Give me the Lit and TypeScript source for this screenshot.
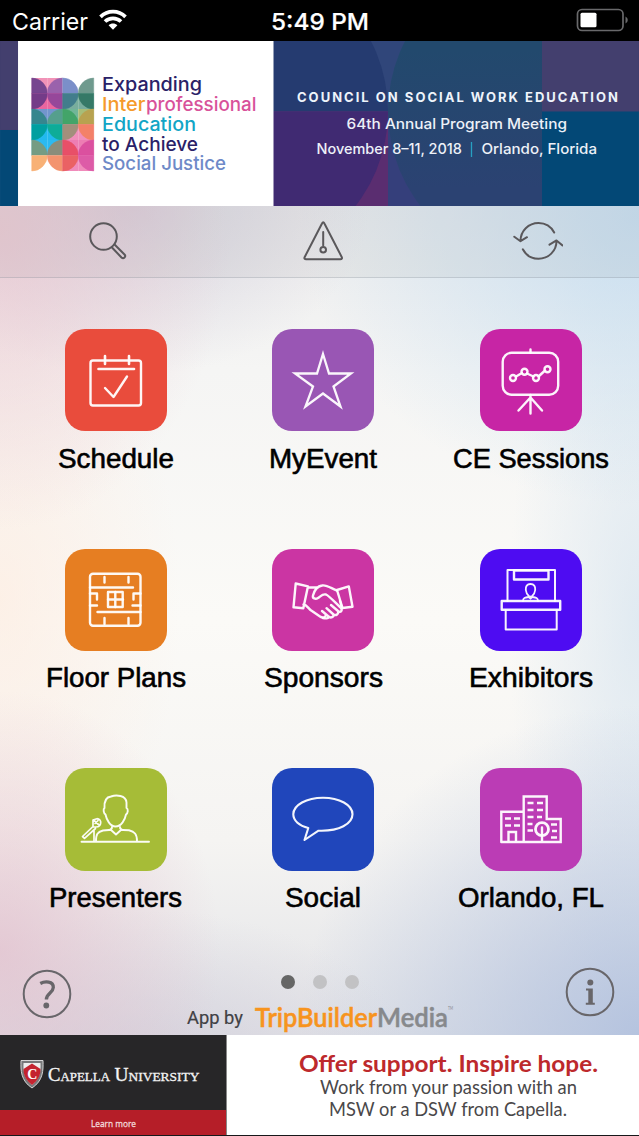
import { LitElement, html, svg, css } from "lit";
import { customElement, property } from "lit/decorators.js";

/** One line of text set to an exact measure. */
@customElement("fit-line")
class FitLine extends LitElement {
  @property() text = "";
  @property({ type: Number }) measure = 100;
  @property({ type: Number }) lead = 30;
  @property({ type: Number }) base = 22;
  static styles = css`
    :host { display: block; line-height: 0; }
    svg { display: block; overflow: visible; }
    text { fill: currentColor; stroke: currentColor; stroke-width: var(--heavy, 0); }
  `;
  render() {
    return html`<svg width=${this.measure} height=${this.lead}>
      <text x="0" y=${this.base} textLength=${this.measure} lengthAdjust="spacingAndGlyphs">${this.text}</text>
    </svg>`;
  }
}

const calendar = svg`<rect x="25.5" y="31.5" width="50.5" height="45" rx="2.5"/>
  <path d="M40 27v8M64 27v8" stroke-width="2.6"/><path d="M33.5 40H69" stroke-width="2.6"/><path d="M40 59l8.5 9L62 47.5"/>`;
const star = svg`<path stroke-width="2.300" stroke-linejoin="miter" d="M51 25l6 19.500h22l-17.500 13 7 20-17.500-13-17.500 13 7.500-20-18-13h22z"/>`;
const chart = svg`<rect x="22.7" y="23.700" width="55.500" height="42" rx="9"/>
  <path d="M50.500 20.500v3M50.500 66v18.500M50.500 68.500l-12 13M50.500 68.500l11.500 13M36 47.500l6-3.500M47 44.500l6.500 3M58.500 47.500l6.500-6"/>
  <circle cx="33" cy="49" r="3"/><circle cx="44.500" cy="42.700" r="3"/><circle cx="56" cy="49" r="3"/><circle cx="67.500" cy="40.200" r="3"/>`;
const plan = svg`<rect x="25" y="24.700" width="50.500" height="52" rx="3"/>
  <path d="M39.500 28v5.500M63.500 28v5.500M25 38.500h43M32.500 63h43M39.500 69v6M63.500 69v6M25 44.500h7v6M25 56.500h7M75.500 44.500h-7v6M75.500 56.500h-8M50.300 43v15M43 50.500h15"/>
  <rect x="43" y="43" width="14.700" height="15"/>`;
const handshake = svg`<path d="M23.700 34.500L36 37.300 31.300 59.300 21.500 58.300zM65 41l11.800-3.600 3.700 20.300-10 1.300zM36 38.500h8.500M31.500 55.500c3 .3 4.500 3.300 7 5.500l9.500 6.500c2 1.500 4.500 1.500 5.500-.5"/>
  <path d="M65 41.500c-5-1.500-10-6-15-5-5 .8-7.500 4.500-9 10-.8 3 2.500 4 5 2.500 2.500-1.500 4.500-4.500 8-3.500 3.500 1.500 10 9 14.500 13 2.500 2.500.5 5-2 4M66 62l-7-6M66 62c1 3-2 5-4.500 3.500l-7-6.300M61.500 65.500c.5 2.500-2.500 4-5 2l-6.500-5.500M56.500 67.500c0 2.500-3.500 2-5.500 1.500M68 52l2 7"/>`;
const booth = svg`<path stroke-width="2" d="M27.500 52V21H75v31"/><rect x="34" y="21.500" width="34.500" height="9"/>
  <rect x="21.700" y="52" width="58.500" height="8.700"/><path stroke-width="2" d="M25.700 61v19.500h51V61"/>
  <path stroke-width="1.800" d="M50.500 35c3.500 0 5 2.300 4.700 6-.4 3-1.700 5-3 6l-1.700.8-1.700-.8c-1.300-1-2.600-3-3-6-.3-3.700 1.200-6 4.700-6zM43 52c0-3 2-3.500 5.700-4l1.800 1.700 1.800-1.700c3.700.5 5.700 1 5.700 4"/>`;
const speaker = svg`<path stroke-width="1.900" d="M16.500 73.700H84M31 73c0-7 1.500-9 7-10.500l6-.5c2 0 3-1 3-3M72 73c0-7-2.500-9.500-8-10.700l-6-.3c-2 0-3-1-3-3M45.500 61.500l5.500 5 5.500-5"/>
  <path stroke-width="1.900" d="M39.500 40c-.5-8 2-11 6.500-11.500 5-1.800 15-1.500 15.500 6V40c2 1 1.500 5-.5 6.500-1 5-4.500 12-10.500 12-5.500 0-9-7-10-12-2-1.500-2.500-5.500-1-6.500z"/>
  <path stroke-width="1.700" d="M27.500 59L17.500 68.500l2 1.800L30.500 60.500M28 59v-7l4-1.300c2.500 0 4 2 3.700 4.300-.3 3-2.500 4-4.700 4zM29 73V62M28.500 52l6 5.500M30 55.500l3-3"/>`;
const bubble = svg`<path stroke-width="2.100" d="M36.300 60c-9-2-15-7.500-15-13.700 0-9.300 13.300-16.600 29.700-16.600s29.500 7.300 29.500 16.600S67.500 63.500 46.500 62.700L32.500 72z"/>`;
const city = svg`<path stroke-linejoin="miter" d="M21.300 74V43.700H43.700M43.700 74V28.500H66.700V51H80.700V74H21.300M28.500 73.500V64h7.500v9.500M62 59.500V74"/>
  <circle cx="62" cy="61.200" r="6.500" stroke-width="2.800"/>
  <path stroke-width="2.500" stroke-linecap="butt" d="M25 50.500h6M34 50.500h6M25 57.500h6M34 57.500h6M47.500 35h6M57 35h6M47.500 42h6M57 42h6M47.500 49h6M57 49h5M47.500 56h5M47.500 62.500h5.500M71 56.500h6M72 63h5M71 69.500h6"/>`;

const apps = [
  { name: "Schedule", w: 116, color: "#e94c3c", icon: calendar },
  { name: "MyEvent", w: 108, color: "#9956b4", icon: star },
  { name: "CE Sessions", w: 156, color: "#c725a5", icon: chart },
  { name: "Floor Plans", w: 140, color: "#e67e22", icon: plan },
  { name: "Sponsors", w: 119, color: "#cb35a3", icon: handshake },
  { name: "Exhibitors", w: 124, color: "#4e0cf2", icon: booth },
  { name: "Presenters", w: 133, color: "#a6bc37", icon: speaker },
  { name: "Social", w: 76, color: "#2046bb", icon: bubble },
  { name: "Orlando, FL", w: 146, color: "#bb3cb5", icon: city },
];

// Quarter colours of the mosaic: [ground, quarter disc], row by row, four to a row.
const mosaic = [
  ["#f192b7", "#76458f"], ["#f192b7", "#9a62ac"], ["#ffffff", "#7b8fc9"], ["#ffffff", "#6f9a8e"],
  ["#ea659f", "#743b88"], ["#ea659f", "#96479a"], ["#78ad9d", "#427d8c"], ["#78ad9d", "#357967"],
  ["#7295cd", "#36868e"], ["#7295cd", "#559f8d"], ["#71b698", "#43a469"], ["#a6bd79", "#b8a250"],
  ["#22b9ee", "#009fa0"], ["#22b9ee", "#0eac98"], ["#f08fbb", "#a28f7c"], ["#f08fbb", "#f38168"],
  ["#2cbaf1", "#759c83"], ["#2cbaf1", "#8a8d7b"], ["#ed7db3", "#e84f68"], ["#ed7db3", "#db509f"],
  ["#ffffff", "#f8b176"], ["#ffffff", "#f3946f"], ["#f08bbb", "#ea6264"], ["#f08bbb", "#dd5ba7"],
];

@customElement("app-root")
class AppRoot extends LitElement {
  static styles = css`
    :host {
      display: flex; flex-direction: column; width: 639px; height: 1136px; overflow: hidden;
      font-family: "Liberation Sans", Arial, sans-serif; color: #000;
      background:
        radial-gradient(ellipse 230px 300px at 0 230px, rgba(234,196,206,.75), transparent),
        radial-gradient(ellipse 240px 170px at 130px 206px, rgba(200,194,212,.6), transparent),
        radial-gradient(ellipse 220px 260px at 0 950px, rgba(226,190,204,.75), transparent),
        radial-gradient(ellipse 260px 150px at 150px 1060px, rgba(205,200,215,.6), transparent),
        radial-gradient(ellipse 340px 330px at 639px 1035px, rgba(176,192,222,.9), transparent),
        radial-gradient(ellipse 340px 290px at 639px 215px, rgba(194,220,240,.85), transparent),
        radial-gradient(ellipse 130px 420px at 639px 620px, rgba(218,230,240,.8), transparent),
        radial-gradient(ellipse 180px 330px at 0 600px, rgba(253,236,224,.7), transparent),
        linear-gradient(#ececed 206px, #f5f5f4 370px, #fbfaf7 620px, #f5f4f2 840px, #e2e3e7 1035px);
    }
    svg { display: block; }
    .status {
      flex: none; height: 40.5px; background: #000; color: #fff; display: grid;
      grid-template-columns: 1fr auto 1fr; align-items: center; padding: 0 11px 0 12px;
      font: 400 23.5px Inter, sans-serif;
    }
    .carrier { display: flex; align-items: center; gap: 11px; }
    .carrier fit-line, .time { margin-top: 2px; }
    .time { font-weight: 500; --heavy: .2px; }
    .battery { justify-self: end; }
    .banner { flex: none; height: 165.7px; overflow: hidden; }
    .banner text { font-family: Inter, sans-serif; font-weight: 550; }
    .banner .head { font-weight: 700; }
    .tools {
      flex: none; height: 71px; border-bottom: 1px solid rgba(130,140,150,.28);
      background: rgba(90,90,90,.06);
      display: flex; justify-content: space-between; padding: 0 76px 0 82px;
    }
    .tools svg { fill: none; stroke: #5a585b; stroke-width: 2; stroke-linecap: round; stroke-linejoin: round; }
    .grid {
      flex: none; box-sizing: border-box; display: grid;
      grid-template-columns: repeat(3, 207.6px); grid-auto-rows: 219.6px;
      padding: 51px 0 0 12px; height: 635px;
    }
    .app { display: flex; flex-direction: column; align-items: center; }
    .tile { width: 102px; height: 102.200px; border-radius: 20px; }
    .tile svg { fill: none; stroke: #fff; stroke-opacity: .95; stroke-width: 2.400; stroke-linecap: round; stroke-linejoin: round; }
    .name { font-size: 27px; margin-top: 7.500px; --heavy: .6px; }
    .foot { flex: none; height: 121.800px; display: flex; justify-content: space-between; padding: 0 24px 0 22px; }
    .round { margin-top: 55.500px; }
    .round.info { margin-top: 54px; }
    .round svg { fill: none; stroke: #68666a; stroke-width: 2; }
    .round .mark { fill: #68666a; stroke: none; }
    .middle { display: flex; flex-direction: column; align-items: center; margin: 61.500px 0 0 2px; }
    .dots { display: flex; gap: 18px; }
    .dot { width: 14px; height: 14px; border-radius: 50%; background: #c2c2c4; }
    .dot.on { background: #666; }
    .credit { display: flex; margin-top: 11.500px; }
    .by { font: 400 19px Roboto, sans-serif; color: #414145; margin-right: 12px; --heavy: .2px; }
    .trip { font: 600 26px Lato, sans-serif; color: #f7941e; --heavy: .5px; }
    .media { font: 600 26px Lato, sans-serif; color: #87898c; --heavy: .5px; }
    .tm { font: 400 6px Lato, sans-serif; color: #87898c; }
    .ad { flex: none; height: 100px; display: flex; background: #fff; border-bottom: 1px solid #17181a; }
    .capella { width: 226px; display: flex; flex-direction: column; background: #272628; border-right: .5px solid #888; }
    .brand { height: 75px; }
    .learn { flex: 1; background: #b51e28; color: #f3dadb; display: flex; justify-content: center; font: 400 9.500px "Open Sans", sans-serif; --heavy: .3px; }
    .pitch { flex: 1; display: flex; flex-direction: column; align-items: center; padding: 14px 0 0 30px; box-sizing: border-box; }
    .offer { font: 700 23.500px Lato, sans-serif; color: #bd292c; }
    .copy { font: 400 19.500px Lato, sans-serif; color: #4a484a; }
  `;

  private fit(cls: string, text: string, w: number, lead: number, base: number) {
    return html`<fit-line class=${cls} .text=${text} .measure=${w} .lead=${lead} .base=${base}></fit-line>`;
  }

  private banner() {
    const line = (t: string, x: number, y: number, w: number, size: number, fill: string, cls = "") =>
      svg`<text class=${cls} x=${x} y=${y} textLength=${w} lengthAdjust="spacingAndGlyphs" font-size=${size} fill=${fill}>${t}</text>`;
    const quarter = ([ground, disc]: string[], i: number) => {
      const s = 15.5, col = i % 4, row = Math.floor(i / 4);
      const x = 31.700 + col * s, y = 37 + row * s;
      const cx = col % 2 === 0 ? x : x + s;
      const cy = row % 2 === 0 ? y + s : y;
      const ox = cx === x ? x + s : x, oy = cy === y ? y + s : y;
      const sweep = (cx === x) === (cy === y) ? 0 : 1;
      return svg`<rect x=${x} y=${y} width=${s} height=${s} fill=${ground}/>
        <path fill=${disc} stroke=${disc} stroke-width=".5" d="M${cx} ${cy}V${oy}A${s} ${s} 0 0 ${sweep} ${ox} ${cy}Z"/>`;
    };
    return html`<svg class="banner" width="639" height="165.7" viewBox="0 0 639 165.7">
      <defs>
        <linearGradient id="mid" x1="0" y1="0" x2="0" y2="1"><stop offset=".3" stop-color="#22496d"/><stop offset=".75" stop-color="#2b4272"/></linearGradient>
        <clipPath id="centre"><rect x="388" y="0" width="154" height="166"/></clipPath>
        <clipPath id="upper"><rect x="273" y="0" width="269" height="70.500"/></clipPath>
        <clipPath id="lower"><rect x="273" y="70.500" width="115" height="96"/></clipPath>
      </defs>
      <rect width="639" height="165.700" fill="#034876"/>
      <rect width="18" height="89" fill="#433f6e"/>
      <rect x="273.500" width="268.500" height="165.700" fill="#353f7b"/>
      <rect x="273.500" width="268.500" height="70.500" fill="#30467a"/>
      <circle cx="234" cy="70.500" r="154" fill="#253b70" clip-path="url(#upper)"/>
      <rect x="273.500" y="70.500" width="114.500" height="96" fill="#5a2d70"/>
      <circle cx="234" cy="70.500" r="154" fill="#402a72" clip-path="url(#lower)"/>
      <circle cx="542" cy="70.500" r="154" fill="url(#mid)" clip-path="url(#centre)"/>
      <rect x="542" width="97" height="70.500" fill="#433f6e"/>
      <rect x="18" width="255.500" height="165.700" fill="#fff"/>
      ${mosaic.map(quarter)}
      ${line("Expanding", 102, 50.500, 100, 18.500, "#2a2167")}
      ${line("Inter", 102, 70.300, 43.500, 18.500, "#f59a2b")}
      ${line("professional", 146, 70.300, 110.500, 18.500, "#d8529a")}
      ${line("Education", 102, 90.200, 94, 18.500, "#12a5c6")}
      ${line("to Achieve", 102, 110, 96, 18.500, "#2a2167")}
      ${line("Social Justice", 102, 129.500, 124, 18.500, "#6e8ac8")}
      <text class="head" x="297" y="61" textLength="321" font-size="13" fill="#eef4fb">COUNCIL ON SOCIAL WORK EDUCATION</text>
      ${line("64th Annual Program Meeting", 346.500, 88, 220.500, 14.500, "#edf1f8")}
      ${line("November 8–11, 2018", 316.500, 112.700, 145.500, 14.500, "#edf1f8")}
      <path d="M471.500 101v15" stroke="#27a0c2" stroke-width="1.300"/>
      ${line("Orlando, Florida", 481.500, 112.700, 115.500, 14.500, "#edf1f8")}
    </svg>`;
  }

  render() {
    return html`
      <div class="status">
        <div class="carrier">
          ${this.fit("", "Carrier", 76, 30, 24)}
          <svg width="28" height="22" viewBox="0 0 28 22" fill="none" stroke="#fff" stroke-width="3.700">
            <path d="M1.500 7.800C8.500 1 19.500 1 26.500 7.800"/><path d="M6 12.500c4.500-4.300 11.500-4.300 16 0"/>
            <path d="M9.600 16.300c2.500-2.300 6.300-2.300 8.800 0L14 20.700z" fill="#fff" stroke="none"/>
          </svg>
        </div>
        ${this.fit("time", "5:49 PM", 98, 30, 24)}
        <svg class="battery" width="52" height="24" viewBox="0 0 52 24">
          <rect x="1.500" y="1.500" width="45.500" height="21" rx="4.500" fill="none" stroke="#69696b" stroke-width="1.700"/>
          <rect x="4.500" y="4.800" width="16" height="14.500" rx="1.500" fill="#fff"/>
          <path d="M49.500 8.500q2.300 1 2.300 3.500t-2.300 3.500z" fill="#69696b"/>
        </svg>
      </div>
      ${this.banner()}
      <div class="tools">
        <svg width="50" height="71" viewBox="82 206 50 71">
          <circle cx="103.500" cy="236.500" r="13.300"/><path d="M112 247.500l9.500 10c2 2 5-.8 3-3l-9.700-9.700"/>
        </svg>
        <svg width="50" height="71" viewBox="297.500 206 50 71">
          <path d="M321.500 223.500q1.200-2.500 2.400 0l17.400 33.700q.8 2-1.500 2h-34.200q-2.300 0-1.500-2zM322.700 232v13.500"/><circle cx="322.700" cy="249.800" r="2.800"/>
        </svg>
        <svg width="50" height="71" viewBox="513 206 50 71">
          <path d="M520.500 241c0-10 8-18 18-18 6.500 0 12.500 3.500 15.700 9.500M514.300 236.700l6.200 4.500 6.500-4M556.500 241c0 10-8 17.800-18 17.800-6.500 0-12.500-3.500-15.700-9.500M549.500 244.700l7-4.300 6 5"/>
        </svg>
      </div>
      <div class="grid">
        ${apps.map((a) => html`<div class="app">
          <div class="tile" style="background:${a.color}"><svg width="102" height="102" viewBox="0 0 102 102">${a.icon}</svg></div>
          ${this.fit("name", a.name, a.w, 36, 29)}
        </div>`)}
      </div>
      <div class="foot">
        <div class="round"><svg width="50" height="50" viewBox="0 0 50 50"><circle cx="25" cy="25" r="23.300"/>
          <path d="M18.300 14.500C23 12 31.500 12 31.300 18.500c-.2 5.500-7 5.500-6.900 12" stroke-width="3.300"/><circle class="mark" cx="24.300" cy="36.500" r="2.900"/></svg></div>
        <div class="middle">
          <div class="dots"><span class="dot on"></span><span class="dot"></span><span class="dot"></span></div>
          <div class="credit">
            ${this.fit("by", "App by", 56, 34, 24)}
            ${this.fit("trip", "TripBuilder", 122, 34, 27)}
            ${this.fit("media", "Media", 71, 34, 27)}
            ${this.fit("tm", "TM", 5, 34, 10)}
          </div>
        </div>
        <div class="round info"><svg width="50" height="50" viewBox="0 0 50 50"><circle cx="25" cy="25" r="23.300"/>
          <circle class="mark" cx="25.300" cy="15.500" r="3"/><path class="mark" d="M21 21.500h6.800v14.300h2v2h-9v-2h2.500V23.500H21z"/></svg></div>
      </div>
      <div class="ad">
        <div class="capella">
          <svg class="brand" width="226" height="75" viewBox="0 0 226 75">
            <path d="M21 25.500h22c.3 10 .3 20-11 27.500C20.700 45.500 20.700 35.500 21 25.500z" fill="#77787a" stroke="#d5d5d6" stroke-width="1"/>
            <path d="M23.500 28h17c.5 9-1 16-8.500 22-7.500-6-9-13-8.500-22z" fill="#eee"/>
            <path d="M23.500 34L32 28.500 40.500 34c0 7-2.500 11-8.500 16-6-5-8.500-9-8.500-16z" fill="#c4232f"/>
            <text x="27.300" y="43.500" font-family="Liberation Serif, serif" font-weight="700" font-size="14" fill="#fff">C</text>
            <g font-family="Liberation Serif, serif" fill="#f4f4f4" stroke="#f4f4f4" stroke-width=".3">
              <text x="48" y="45.500" textLength="62" lengthAdjust="spacingAndGlyphs" font-size="18">C<tspan font-size="12.500">APELLA</tspan></text>
              <text x="114.500" y="45.500" textLength="85" lengthAdjust="spacingAndGlyphs" font-size="18">U<tspan font-size="12.500">NIVERSITY</tspan></text>
            </g>
          </svg>
          <div class="learn">${this.fit("", "Learn more", 45, 24, 17)}</div>
        </div>
        <div class="pitch">
          ${this.fit("offer", "Offer support. Inspire hope.", 299, 24, 22.800)}
          ${this.fit("copy", "Work from your passion with an", 257, 21.500, 21)}
          ${this.fit("copy", "MSW or a DSW from Capella.", 238, 21.500, 21.500)}
        </div>
      </div>`;
  }
}
